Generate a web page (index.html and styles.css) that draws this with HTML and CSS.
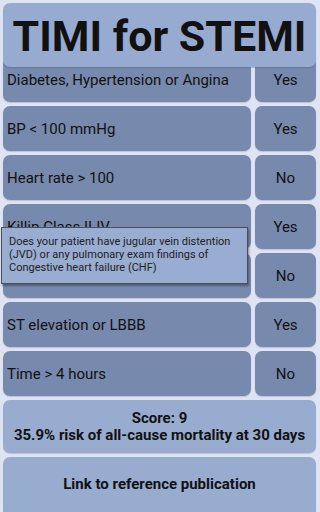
FILE: index.html
```html
<!DOCTYPE html>
<html lang="en">
<head>
    <meta charset="UTF-8">
    <meta name="viewport" content="width=device-width, initial-scale=1.0">
    <title>TIMI for STEMI</title>
    <link rel="stylesheet" href="styles.css">
</head>
<body>
    <div class="app">
        <div class="header">
            <h1>TIMI for STEMI</h1>
        </div>

        <div class="list">
            <div class="row">
                <div class="label">Diabetes, Hypertension or Angina</div>
                <div class="answer">Yes</div>
            </div>
            <div class="row">
                <div class="label">BP &lt; 100 mmHg</div>
                <div class="answer">Yes</div>
            </div>
            <div class="row">
                <div class="label">Heart rate &gt; 100</div>
                <div class="answer">No</div>
            </div>
            <div class="row has-tip">
                <div class="label">Killip Class II-IV</div>
                <div class="answer">Yes</div>
                <div class="tooltip">
                    Does your patient have jugular vein distention (JVD) or any pulmonary exam findings of Congestive heart failure (CHF)
                </div>
            </div>
            <!-- label of this row sits under the tooltip -->
            <div class="row">
                <div class="label"></div>
                <div class="answer">No</div>
            </div>
            <div class="row">
                <div class="label">ST elevation or LBBB</div>
                <div class="answer">Yes</div>
            </div>
            <div class="row">
                <div class="label">Time &gt; 4 hours</div>
                <div class="answer">No</div>
            </div>

            <div class="card score">
                <div>Score: 9</div>
                <div>35.9% risk of all-cause mortality at 30 days</div>
            </div>
            <div class="card link">
                Link to reference publication
            </div>
        </div>
    </div>
</body>
</html>
```

FILE: styles.css
```css
* {
    margin: 0;
    padding: 0;
    box-sizing: border-box;
}

html, body {
    height: 100%;
    overflow: hidden;
}

body {
    font-family: 'Roboto', 'Liberation Sans', sans-serif;
    background: #dfe4f2;
    color: #111;
}

.app {
    padding: 3px 4px 0 3px;
}

.header {
    position: relative;
    z-index: 2;
    height: 64px;
    background: #97abd0;
    border-radius: 7px;
    box-shadow: 0 1px 1px rgba(60, 70, 100, 0.25);
    display: flex;
    align-items: center;
    justify-content: center;
}

.header h1 {
    font-size: 43px;
    font-weight: bold;
    color: #111;
    margin-top: 1px;
}

.list {
    margin-top: -10px;
    display: flex;
    flex-direction: column;
    gap: 4px;
}

.row {
    position: relative;
    display: flex;
    gap: 4px;
    height: 45px;
}

.label,
.answer {
    background: #7789ad;
    border-radius: 7px;
    display: flex;
    align-items: center;
    font-size: 15px;
    box-shadow: 0 1px 1px rgba(60, 70, 100, 0.2);
}

.label {
    width: 248px;
    padding-left: 4px;
}

.answer {
    flex: 1;
    justify-content: center;
}

.tooltip {
    position: absolute;
    z-index: 1;
    left: -2px;
    top: 23px;
    width: 247px;
    height: 57px;
    background: #99acd1;
    border: 1px solid #4a4f5c;
    box-shadow: 1px 2px 2px rgba(30, 35, 50, 0.45);
    padding: 7px 6px 0 7px;
    font-size: 11px;
    line-height: 13px;
    color: #222;
}

.card {
    background: #98acd0;
    border-radius: 7px;
    box-shadow: 0 1px 1px rgba(60, 70, 100, 0.2);
    display: flex;
    flex-direction: column;
    align-items: center;
    justify-content: center;
    font-size: 15px;
    font-weight: bold;
    text-align: center;
}

.score {
    height: 53px;
    line-height: 17px;
}

.link {
    height: 60px;
    padding-bottom: 6px;
}
```
